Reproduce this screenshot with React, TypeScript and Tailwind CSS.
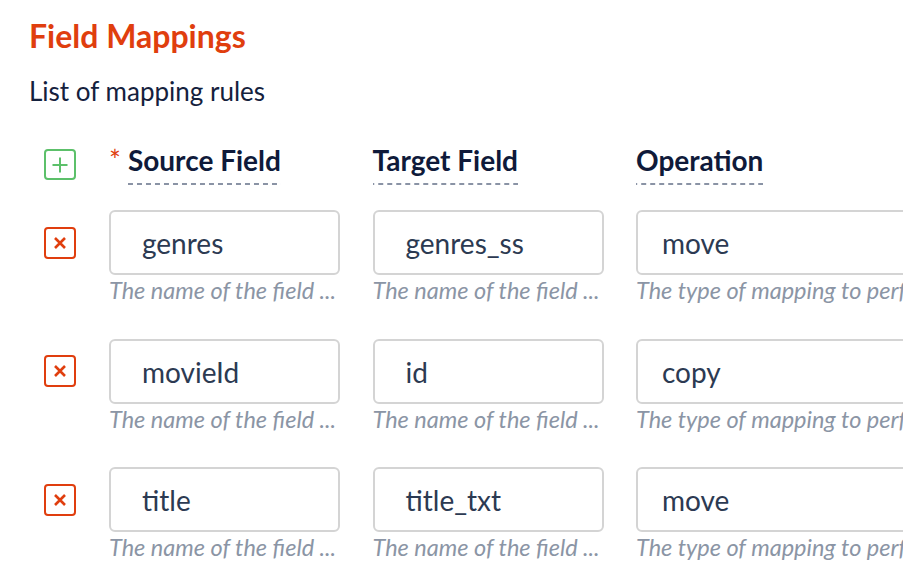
const rows = [
  { source: "genres", target: "genres_ss", op: "move" },
  { source: "movieId", target: "id", op: "copy" },
  { source: "title", target: "title_txt", op: "move" },
];

function PlusButton() {
  return (
    <button className="w-[32px] h-[31px] border-2 border-[#5cc06a] rounded-[4px] flex items-center justify-center">
      <svg width="18" height="18" viewBox="0 0 18 18">
        <path d="M9 1.5v15M1.5 9h15" stroke="#5cc06a" strokeWidth="2" />
      </svg>
    </button>
  );
}

function RemoveButton() {
  return (
    <button className="w-[32px] h-[32px] border-2 border-[#e03e0e] rounded-[4px] flex items-center justify-center">
      <svg width="14" height="14" viewBox="0 0 14 14">
        <path d="M2 2l10 10M12 2L2 12" stroke="#e03e0e" strokeWidth="2.6" />
      </svg>
    </button>
  );
}

function HeaderLabel({ text, required }: { text: string; required?: boolean }) {
  return (
    <div className="flex items-start">
      {required && <span className="text-[#e03e0e] text-[28px] leading-[34px] mr-[7px]">*</span>}
      <span className="text-[28px] font-bold text-[#0f1a3a] leading-[34px] pb-[8px] bg-[linear-gradient(to_right,#8a93a5_55%,transparent_0)] bg-[length:9px_2px] bg-repeat-x bg-bottom">
        {text}
      </span>
    </div>
  );
}

function Field({ value, help, width, pad }: { value: string; help: string; width: string; pad: string }) {
  return (
    <div className={`${width} shrink-0`}>
      <div className={`h-[65px] border-2 border-[#d4d4d4] rounded-[6px] pt-[14px] ${pad} text-[28px] leading-[34px] text-[#2c3a52]`}>
        {value}
      </div>
      <div className="text-[23.5px] leading-[30px] italic text-[#8b95a5] whitespace-nowrap overflow-hidden text-ellipsis">
        {help}
      </div>
    </div>
  );
}

export default function App() {
  return (
    <div className="w-[914px] h-[584px] bg-white overflow-hidden font-['Lato',sans-serif]">
      <div className="w-[903px] overflow-hidden pl-[29px] pt-[16px]">
        <h2 className="text-[32px] font-bold text-[#e03e0e] leading-[40px]">Field Mappings</h2>
        <p className="mt-[19px] text-[26px] text-[#14213d] leading-[32px]">List of mapping rules</p>

        <div className="mt-[36px] pl-[15px] flex flex-col">
          <div className="flex items-start gap-x-[32.5px]">
            <div className="w-[32.5px] shrink-0 pt-[6px]">
              <PlusButton />
            </div>
            <div className="w-[231px] shrink-0">
              <HeaderLabel text="Source Field" required />
            </div>
            <div className="w-[231px] shrink-0">
              <HeaderLabel text="Target Field" />
            </div>
            <div className="w-[300px] shrink-0">
              <HeaderLabel text="Operation" />
            </div>
          </div>

          {rows.map((r, i) => (
            <div key={i} className={`flex items-start gap-x-[32.5px] ${i === 0 ? "mt-[25px]" : "mt-[33.5px]"}`}>
              <div className="w-[32.5px] shrink-0 h-[65px] flex items-center">
                <RemoveButton />
              </div>
              <Field value={r.source} help="The name of the field ..." width="w-[231px]" pad="pl-[31px]" />
              <Field value={r.target} help="The name of the field ..." width="w-[231px]" pad="pl-[31px]" />
              <Field value={r.op} help="The type of mapping to perform" width="w-[300px]" pad="pl-[24px]" />
            </div>
          ))}
        </div>
      </div>
    </div>
  );
}
